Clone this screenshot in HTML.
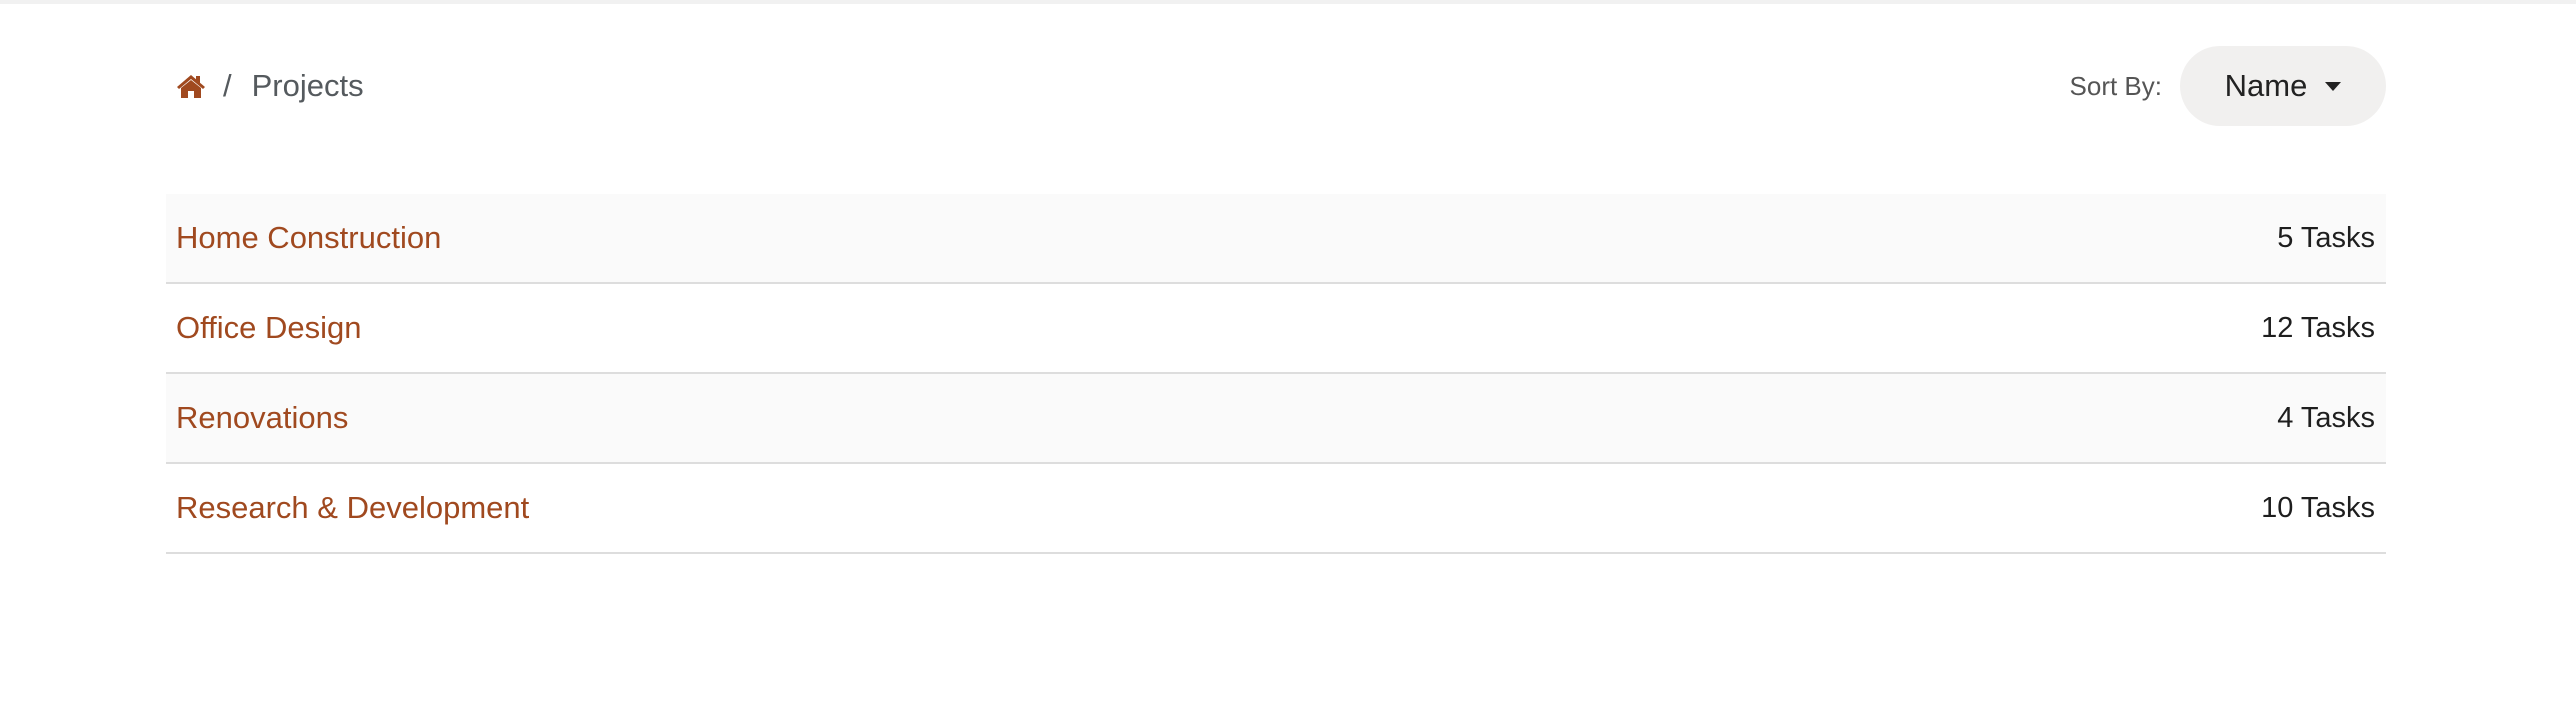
<!DOCTYPE html>
<html><head><style>
body{margin:0;width:2576px;height:702px;background:#fff;font-family:"Liberation Sans",sans-serif;position:relative;overflow:hidden}
.top{position:absolute;left:0;top:0;width:2576px;height:4px;background:#f1f1f1}
.bc{position:absolute;left:176px;top:68px;font-size:31px;color:#555a5e;display:flex;align-items:center}
.sort{position:absolute;left:2000px;top:64px;width:162px;text-align:right;font-size:26px;color:#555;line-height:44px}
.btn{position:absolute;left:2180px;top:46px;width:206px;height:80px;border-radius:40px;background:#f1f0ef;font-size:31px;color:#222;display:flex;align-items:center;justify-content:center}
.caret{display:inline-block;width:0;height:0;border-left:8px solid transparent;border-right:8px solid transparent;border-top:9px solid #222;margin-left:18px}
.tbl{position:absolute;left:166px;top:194px;width:2220px}
.row{height:88px;border-bottom:2px solid #ddd;display:flex;align-items:center;justify-content:space-between;padding:0 11px 0 10px;font-size:29px;box-sizing:content-box}
.row.g{background:#fafafa}
.row a{color:#a0491f;text-decoration:none;font-size:31px}
.row span{color:#1e1e1e}
</style></head><body>
<div class="top"></div>
<div class="bc">
<svg width="30" height="24" viewBox="0 0 30 24"><path d="M15 1 L1 13 L3 15 L15 5 L27 15 L29 13 L24 8.7 V2 H20 V5.3 Z" fill="#a0491f"/><path d="M5 14 L15 6 L25 14 V24 H18 V17 H12 V24 H5 Z" fill="#a0491f"/></svg>
<span style="margin-left:17px">/</span><span style="margin-left:20px">Projects</span></div>
<div class="sort">Sort By:</div>
<div class="btn">Name<span class="caret"></span></div>
<div class="tbl">
<div class="row g"><a>Home Construction</a><span>5 Tasks</span></div>
<div class="row"><a>Office Design</a><span>12 Tasks</span></div>
<div class="row g"><a>Renovations</a><span>4 Tasks</span></div>
<div class="row"><a>Research &amp; Development</a><span>10 Tasks</span></div>
</div>
</body></html>
